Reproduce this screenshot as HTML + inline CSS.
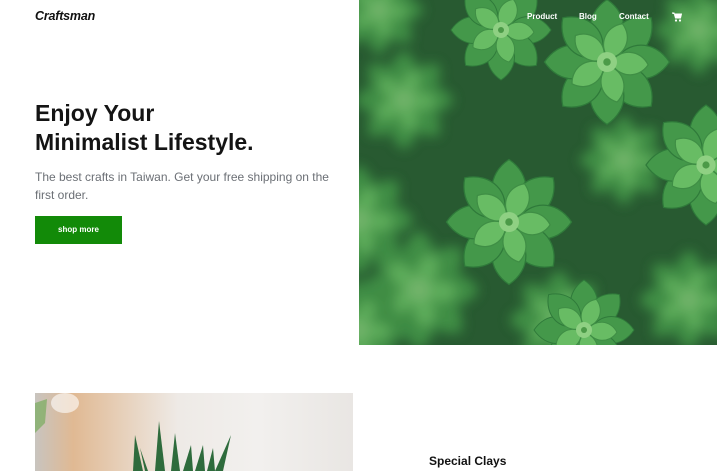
<!DOCTYPE html>
<html><head><meta charset="utf-8"><style>
*{margin:0;padding:0;box-sizing:border-box}
body{width:717px;height:471px;overflow:hidden;background:#fff;font-family:"Liberation Sans",sans-serif;position:relative}
.logo{position:absolute;left:35px;top:9px;font-size:12.5px;font-weight:bold;font-style:italic;color:#111;letter-spacing:-0.2px}
h1{position:absolute;left:35px;top:99px;font-size:23px;line-height:29px;font-weight:bold;color:#141414}
p.sub{position:absolute;left:35px;top:168px;width:300px;font-size:12px;line-height:18px;color:#6b6f75}
.btn{position:absolute;left:35px;top:216px;width:87px;height:28px;background:#128a08;color:#fff;font-size:8px;font-weight:bold;text-align:center;line-height:28px}
.hero{position:absolute;left:359px;top:0;width:358px;height:345px;overflow:hidden;background:#1f4a2a}
nav{position:absolute;top:12px;left:527px;font-size:8px;color:#fff;font-weight:bold}
nav span{position:absolute;white-space:nowrap}
.img2{position:absolute;left:35px;top:393px;width:318px;height:78px;overflow:hidden;background:linear-gradient(90deg,#c8c4bf 0%,#e0b993 12%,#eeeae6 45%,#f2f0ee 70%,#e9e6e3 100%)}
.sc{position:absolute;left:429px;top:454px;font-size:12px;font-weight:bold;color:#111}
</style></head><body>
<div class="logo">Craftsman</div>
<h1>Enjoy Your<br>Minimalist Lifestyle.</h1>
<p class="sub">The best crafts in Taiwan. Get your free shipping on the first order.</p>
<div class="btn">shop more</div>
<div class="hero">
<svg width="358" height="345" viewBox="0 0 358 345">
<defs>
<filter id="bl"><feGaussianBlur stdDeviation="6"/></filter>
<g id="ros">
<g fill="#44984a" stroke="#2f7a3a" stroke-width="1"><path id="pt" d="M0 -6 C18 -16 18 -38 0 -50 C-18 -38 -18 -16 0 -6Z"/><use href="#pt" transform="rotate(45)"/><use href="#pt" transform="rotate(90)"/><use href="#pt" transform="rotate(135)"/><use href="#pt" transform="rotate(180)"/><use href="#pt" transform="rotate(225)"/><use href="#pt" transform="rotate(270)"/><use href="#pt" transform="rotate(315)"/></g>
<g fill="#68bc64" stroke="#3f8e45" stroke-width="1"><path id="p2" d="M0 -3 C12 -10 12 -26 0 -33 C-12 -26 -12 -10 0 -3Z" transform="rotate(22)"/><use href="#p2" transform="rotate(72)"/><use href="#p2" transform="rotate(144)"/><use href="#p2" transform="rotate(216)"/><use href="#p2" transform="rotate(288)"/></g>
<circle r="8" fill="#8fd083"/><circle r="3" fill="#4c9a48"/>
</g>
</defs>
<rect width="358" height="345" fill="#285a31"/>
<g filter="url(#bl)" opacity="0.85">
<use href="#ros" transform="translate(45,100) scale(1)"/>
<use href="#ros" transform="translate(0,220) scale(1.1)"/>
<use href="#ros" transform="translate(60,290) scale(1.2)"/>
<use href="#ros" transform="translate(265,160) scale(0.9)"/>
<use href="#ros" transform="translate(330,300) scale(1)"/>
<use href="#ros" transform="translate(200,320) scale(1)"/>
<use href="#ros" transform="translate(340,30) scale(0.9)"/>
<use href="#ros" transform="translate(20,10) scale(0.9)"/>
<use href="#ros" transform="translate(0,330) scale(1)"/>
</g>
<use href="#ros" transform="translate(142,30) scale(1)"/>
<use href="#ros" transform="translate(248,62) scale(1.25)"/>
<use href="#ros" transform="translate(150,222) scale(1.25)"/>
<use href="#ros" transform="translate(347,165) scale(1.2)"/>
<use href="#ros" transform="translate(225,330) scale(1)"/>
</svg>
</div>
<nav><span style="left:0">Product</span><span style="left:52px">Blog</span><span style="left:92px">Contact</span>
<svg style="position:absolute;left:145px;top:0" width="10" height="10" viewBox="0 0 10 10"><path d="M0 1h2l1.5 5h5l1-4H3z" fill="#fff" stroke="#fff" stroke-width="1"/><circle cx="4" cy="8.5" r="1.1" fill="#fff"/><circle cx="8" cy="8.5" r="1.1" fill="#fff"/></svg></nav>
<div class="img2">
<svg width="318" height="78" viewBox="0 0 318 78">
<ellipse cx="30" cy="10" rx="14" ry="10" fill="#fff" opacity=".6"/>
<path d="M0 10 L12 6 L10 30 L0 40Z" fill="#6aa84f" opacity=".6"/>
<g fill="#2e6b3c">
<path d="M98 78 L100 42 L108 78Z"/><path d="M120 78 L124 28 L130 78Z"/><path d="M136 78 L140 40 L145 78Z"/><path d="M148 78 L156 52 L158 78Z"/><path d="M160 78 L168 52 L170 78Z"/><path d="M172 78 L178 55 L180 78Z"/><path d="M180 78 L196 42 L188 78Z"/><path d="M110 78 L105 55 L113 78Z"/>
</g>
</svg>
</div>
<div class="sc">Special Clays</div>
</body></html>
